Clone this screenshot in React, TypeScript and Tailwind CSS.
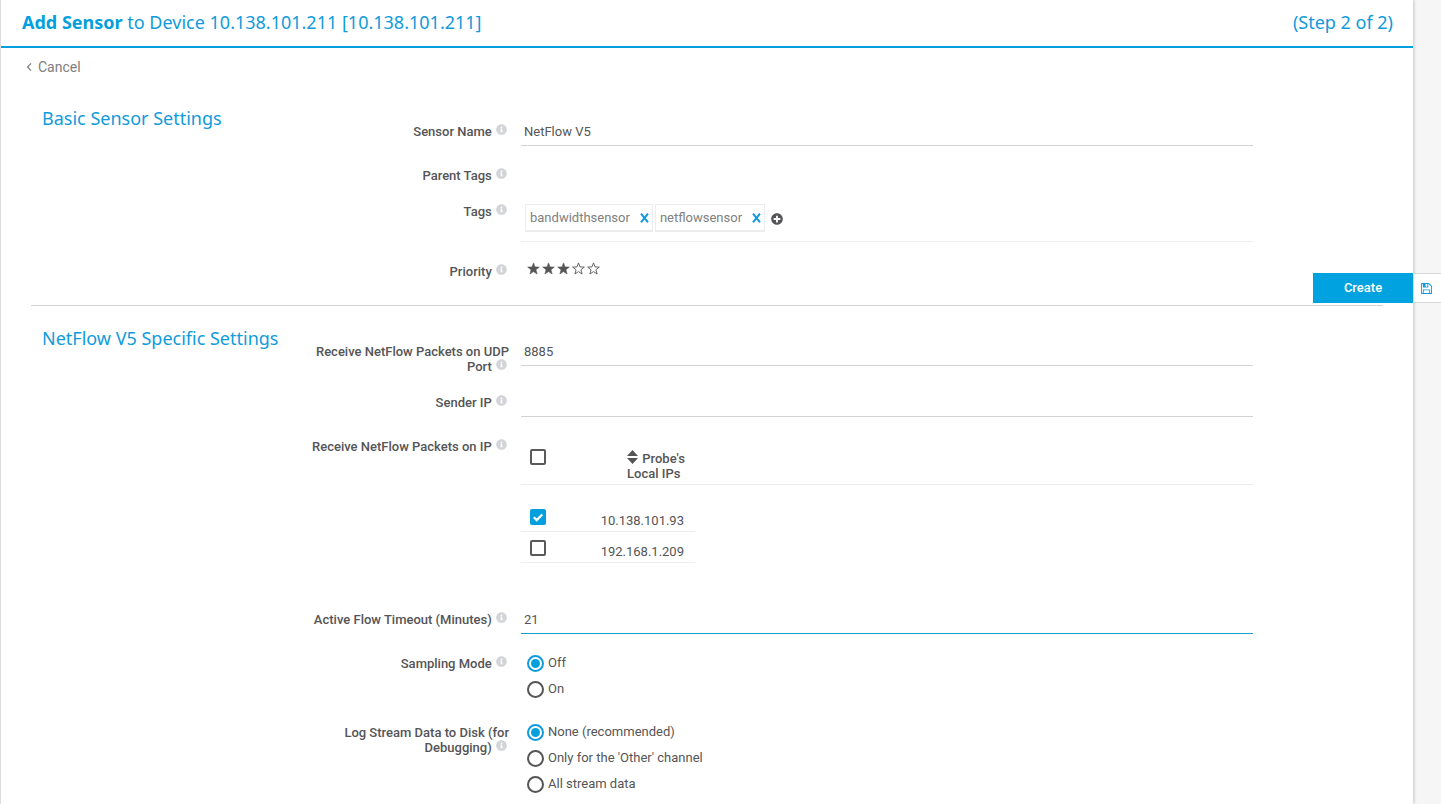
import { useState, type ReactNode } from "react";
import { FaInfoCircle, FaPlusCircle } from "react-icons/fa";

function Section({ title, children }: { title: string; children: ReactNode }) {
  return (
    <section className="mx-[30px] grid grid-cols-[270px_1fr] border-b border-[#d3d3d3] pt-5 pr-[130px] last:border-b-0">
      <h2 className="pl-[11px] font-['Noto_Sans',sans-serif] text-[18px] leading-6 whitespace-nowrap text-[#109bdc]">{title}</h2>
      <div className="flex flex-col gap-[15px] pt-3">{children}</div>
    </section>
  );
}

function Row({ label, htmlFor, children }: { label: string; htmlFor?: string; children?: ReactNode }) {
  return (
    <div className="grid grid-cols-[208px_1fr] gap-3">
      <div className="pt-[6px] text-right text-[13px] leading-[15px] font-medium">
        <label htmlFor={htmlFor}>{label}</label>{" "}
        <FaInfoCircle className="mr-[2px] ml-[1px] inline size-[11px] align-[1px] text-[#d3d4d7]" />
      </div>
      <div className="min-w-0">{children}</div>
    </div>
  );
}

function TextField({ id, value, focused = false }: { id: string; value: string; focused?: boolean }) {
  return (
    <div className="pb-px">
      <input
        id={id}
        defaultValue={value}
        className={`block h-7 w-full border-b px-[3px] pb-px text-[13px] outline-none ${focused ? "border-[#159dcb]" : "border-[#d3d3d3]"}`}
      />
    </div>
  );
}

function Tag({ name }: { name: string }) {
  return (
    <span className="flex h-7 items-center gap-[10px] border border-b-2 border-[#ededed] pr-[3px] pl-1 text-[13px] text-[#808080]">
      {name}
      <button type="button" aria-label={`Remove ${name}`} className="text-[#109bdc]">
        <svg viewBox="0 0 9 10" className="h-[10px] w-[9px]" fill="none" stroke="currentColor" strokeWidth="2">
          <path d="M1 .7 8 9.3M8 .7 1 9.3" />
        </svg>
      </button>
    </span>
  );
}

function Check({ label, initial = false }: { label: string; initial?: boolean }) {
  const [on, setOn] = useState(initial);
  return (
    <span className="relative block size-4">
      <input
        type="checkbox"
        aria-label={label}
        checked={on}
        onChange={() => setOn(!on)}
        className="block size-4 appearance-none rounded-[2px] border-2 border-[#5a5a5c] checked:border-[#049fdd] checked:bg-[#049fdd]"
      />
      {on && (
        <svg viewBox="0 0 16 16" className="pointer-events-none absolute inset-0" fill="none" stroke="white" strokeWidth="2.2">
          <path d="m3.8 8.3 2.9 2.8 5.6-5.6" />
        </svg>
      )}
    </span>
  );
}

function RadioGroup({ name, options }: { name: string; options: string[] }) {
  return (
    <div role="radiogroup" aria-label={name} className="pb-[2px] pl-[6px]">
      {options.map((option, i) => (
        <label key={option} className="flex h-[26px] items-center gap-1 text-[13px]">
          <input
            type="radio"
            name={name}
            defaultChecked={i === 0}
            className="grid size-[17px] appearance-none place-items-center rounded-full border-2 border-[#555557] checked:border-[#109bdc] checked:before:size-[9px] checked:before:rounded-full checked:before:bg-[#049fdd] checked:before:content-['']"
          />
          {option}
        </label>
      ))}
    </div>
  );
}

function SortIcon() {
  return (
    <svg viewBox="0 0 11 14" className="mr-px inline h-[14px] w-[11px] align-[-1px]" fill="currentColor">
      <path d="M5.5 0 11 6H0ZM5.5 14 0 8h11Z" />
    </svg>
  );
}

function Star({ filled }: { filled: boolean }) {
  return (
    <svg viewBox="0 0 13 13" className="size-[13px]" fill={filled ? "currentColor" : "none"} stroke="currentColor" strokeWidth={filled ? 0.6 : 0.9}>
      <path d="M6.5.9 8 4.9l4.3.2-3.4 2.7 1.2 4.2-3.6-2.4-3.6 2.4 1.2-4.2L.7 5.1 5 4.9Z" />
    </svg>
  );
}

const probeIps = [
  { ip: "10.138.101.93", selected: true },
  { ip: "192.168.1.209", selected: false },
];

export default function App() {
  return (
    <div className="min-h-screen bg-[#f6f6f6] pr-7 font-[Roboto,sans-serif] text-[#555557]">
      <main className="min-h-screen border-l border-[#dcdcdc] bg-white shadow-[1px_0_3px_rgba(0,0,0,0.2)]">
        <header className="flex h-12 items-center justify-between border-b-2 border-[#049fdd] pr-5 pb-px pl-[21px] font-['Noto_Sans',sans-serif] text-[18px] text-[#109bdc]">
          <h1>
            <b className="font-bold text-[#049fdd]">Add Sensor</b> to Device 10.138.101.211 [10.138.101.211]
          </h1>
          <span>(Step 2 of 2)</span>
        </header>

        <nav className="flex h-[38px] pl-[25px]">
          <a href="#cancel" className="flex items-center gap-1 text-[14px] text-[#808080]">
            <svg viewBox="0 0 8 12" className="h-3 w-2" fill="none" stroke="currentColor" strokeWidth="1.3">
              <path d="M5 2.4 1.6 6 5 9.6" />
            </svg>
            Cancel
          </a>
        </nav>

        <form onSubmit={(e) => e.preventDefault()}>
          <div>
            <Section title="Basic Sensor Settings">
              <Row label="Sensor Name" htmlFor="sensor-name">
                <TextField id="sensor-name" value="NetFlow V5" />
              </Row>
              <Row label="Parent Tags" />
              <Row label="Tags">
                <div className="mb-px flex items-start gap-[2px] border-b border-[#ededed] pt-[6px] pb-[9px] pl-1">
                  <Tag name="bandwidthsensor" />
                  <Tag name="netflowsensor" />
                  <button type="button" aria-label="Add tag" className="ml-1 flex h-7 items-center pt-[2px]">
                    <FaPlusCircle className="size-3" />
                  </button>
                </div>
              </Row>
              <Row label="Priority">
                <div role="img" aria-label="3 of 5 stars" className="flex gap-[2px] pt-1 pb-[30px] pl-[6px]">
                  {[1, 2, 3, 4, 5].map((n) => (
                    <Star key={n} filled={n <= 3} />
                  ))}
                </div>
              </Row>
            </Section>

            <Section title="NetFlow V5 Specific Settings">
              <Row label="Receive NetFlow Packets on UDP Port" htmlFor="udp-port">
                <TextField id="udp-port" value="8885" />
              </Row>
              <Row label="Sender IP" htmlFor="sender-ip">
                <TextField id="sender-ip" value="" />
              </Row>
              <Row label="Receive NetFlow Packets on IP">
                <div className="pb-7">
                  <table className="w-full table-fixed border-separate border-spacing-0 text-[13px] leading-[15px]">
                    <colgroup>
                      <col className="w-10" />
                      <col className="w-[134px]" />
                      <col />
                    </colgroup>
                    <thead>
                      <tr>
                        <th className="border-b border-[#ededed] pt-4 pl-[9px] align-top">
                          <Check label="Select all" />
                        </th>
                        <th className="border-b border-[#ededed] pt-[17px] pb-[3px] pl-[66px] text-left font-medium">
                          <SortIcon /> Probe's Local IPs
                        </th>
                        <th className="border-b border-[#ededed]" />
                      </tr>
                    </thead>
                    <tbody className="before:block before:h-4 before:content-['']">
                      {probeIps.map(({ ip, selected }) => (
                        <tr key={ip}>
                          <td className="border-b border-[#ededed] pt-2 pl-[9px] align-top">
                            <Check label={ip} initial={selected} />
                          </td>
                          <td className="border-b border-[#ededed] pt-3 pr-[11px] pb-[3px] text-right">{ip}</td>
                        </tr>
                      ))}
                    </tbody>
                  </table>
                </div>
              </Row>
              <Row label="Active Flow Timeout (Minutes)" htmlFor="flow-timeout">
                <TextField id="flow-timeout" value="21" focused />
              </Row>
              <Row label="Sampling Mode">
                <RadioGroup name="Sampling Mode" options={["Off", "On"]} />
              </Row>
              <Row label="Log Stream Data to Disk (for Debugging)">
                <RadioGroup
                  name="Log Stream Data to Disk"
                  options={["None (recommended)", "Only for the 'Other' channel", "All stream data"]}
                />
              </Row>
            </Section>
          </div>

          <div className="fixed top-[273px] right-0 flex h-[30px]">
            <button type="submit" className="w-[100px] bg-[#00a2df] text-[13px] font-medium text-white">
              Create
            </button>
            <button type="button" aria-label="Save" className="flex w-7 items-center justify-center border-y border-l border-[#d8d8d8] bg-white pr-[2px] text-[#109bdc]">
              <svg viewBox="0 128 1536 1536" className="size-[11px]" fill="currentColor">
                <path d="M384 1536h768v-384h-768v384zm896 0h128v-896q0-14-10-38.5t-20-34.5l-281-281q-10-10-34-20t-39-10v416q0 40-28 68t-68 28h-576q-40 0-68-28t-28-68v-416h-128v1280h128v-416q0-40 28-68t68-28h832q40 0 68 28t28 68v416zm-384-928v-320q0-13-9.5-22.5t-22.5-9.5h-192q-13 0-22.5 9.5t-9.5 22.5v320q0 13 9.5 22.5t22.5 9.5h192q13 0 22.5-9.5t9.5-22.5zm640 32v928q0 40-28 68t-68 28h-1344q-40 0-68-28t-28-68v-1344q0-40 28-68t68-28h928q40 0 88 20t76 48l280 280q28 28 48 76t20 88z" />
              </svg>
            </button>
          </div>
        </form>
      </main>
    </div>
  );
}
